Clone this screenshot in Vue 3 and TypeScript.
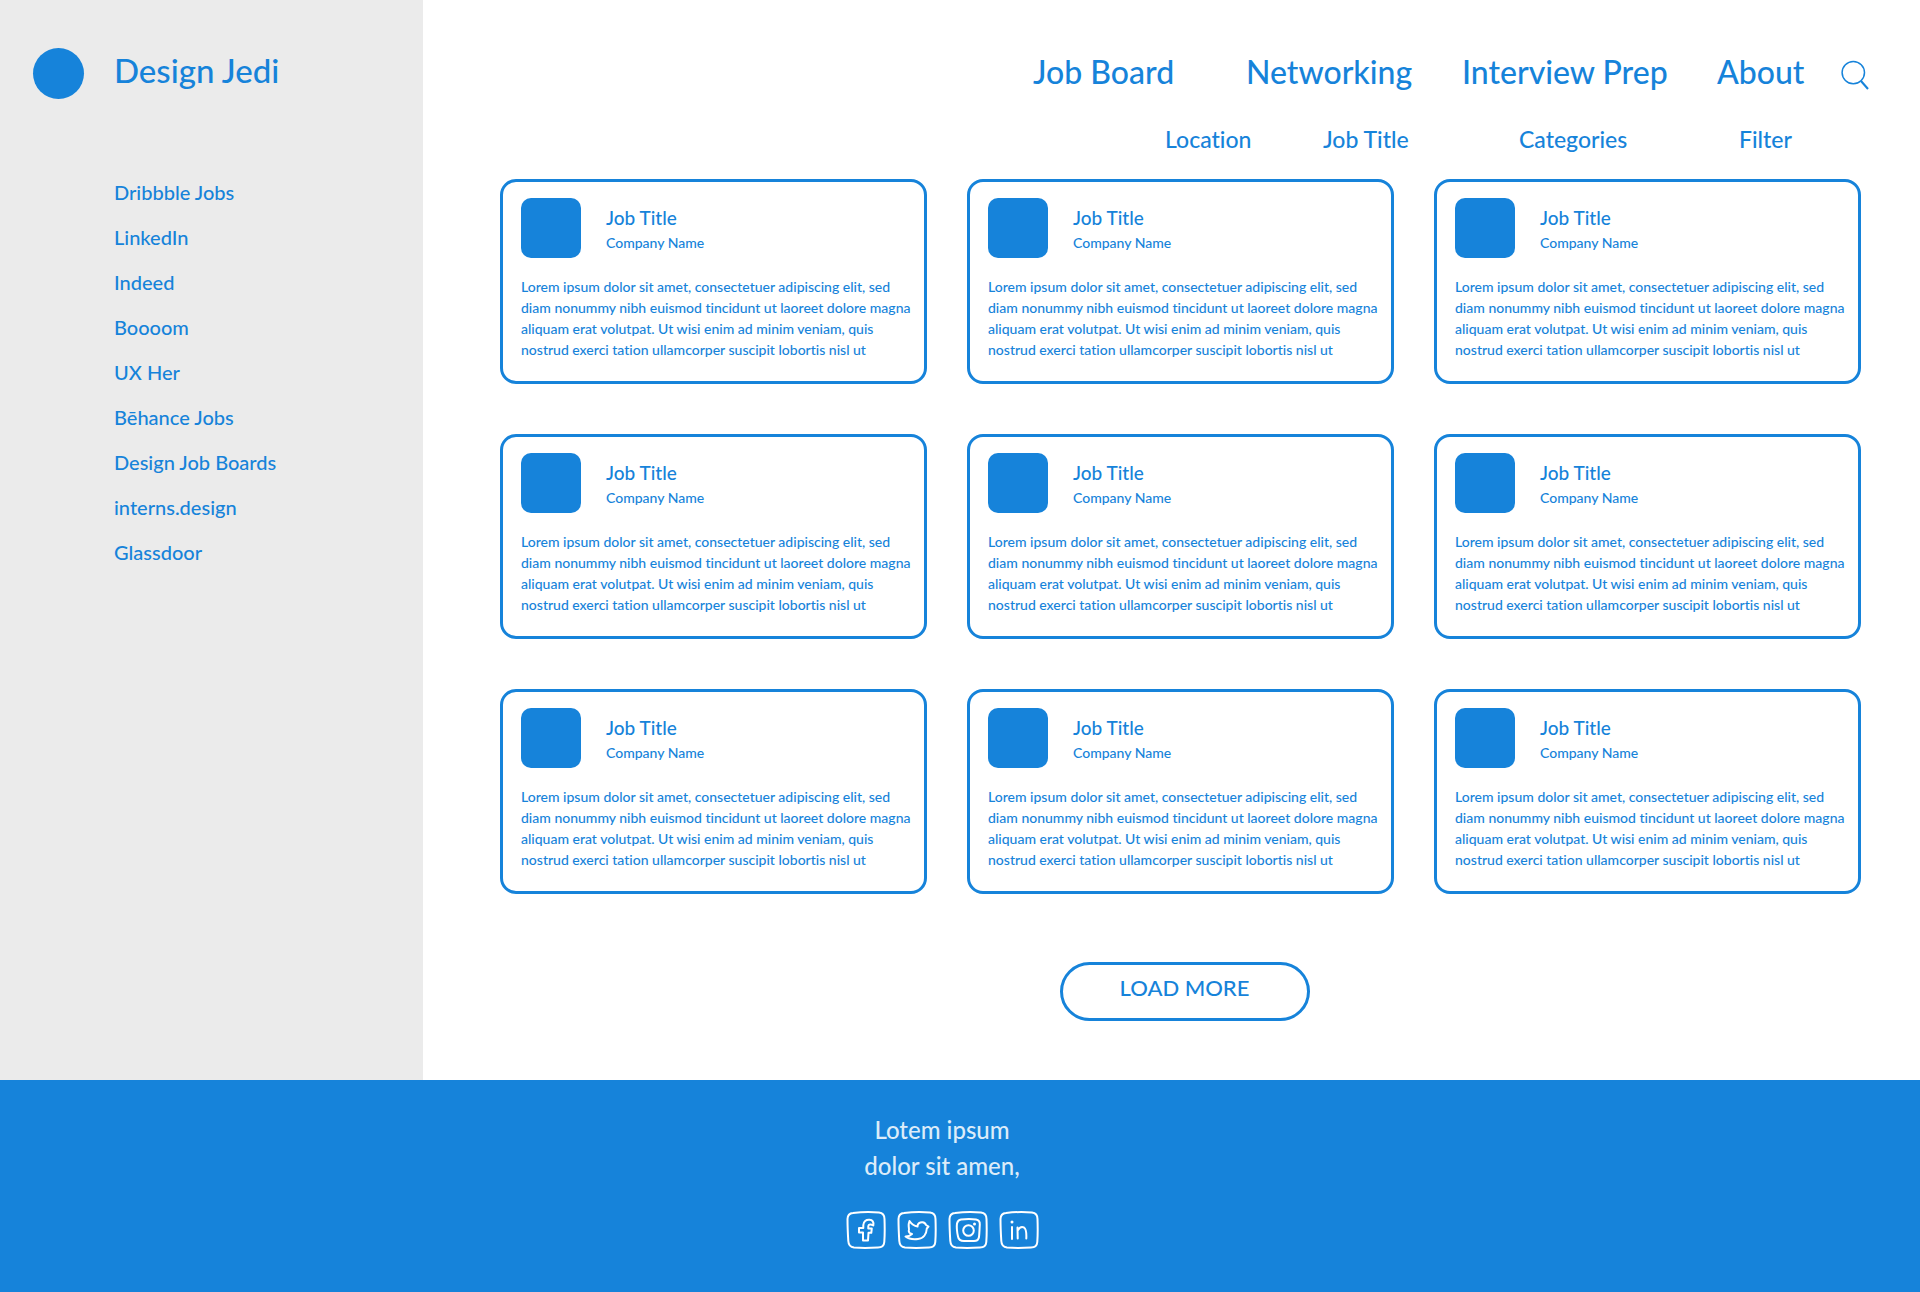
<script setup lang="ts">
interface Job {
  id: number
  title: string
  company: string
  summary: string
}

const boards: string[] = [
  'Dribbble Jobs',
  'LinkedIn',
  'Indeed',
  'Boooom',
  'UX Her',
  'Bēhance Jobs',
  'Design Job Boards',
  'interns.design',
  'Glassdoor',
]

const sections: string[] = ['Job Board', 'Networking', 'Interview Prep', 'About']
const filters: string[] = ['Location', 'Job Title', 'Categories', 'Filter']

const summary = [
  'Lorem ipsum dolor sit amet, consectetuer adipiscing elit, sed',
  'diam nonummy nibh euismod tincidunt ut laoreet dolore magna',
  'aliquam erat volutpat. Ut wisi enim ad minim veniam, quis',
  'nostrud exerci tation ullamcorper suscipit lobortis nisl ut',
].join('\n')

const jobs: Job[] = Array.from({ length: 9 }, (_, id) => ({
  id,
  title: 'Job Title',
  company: 'Company Name',
  summary,
}))
</script>

<template>
  <div class="page">
    <div class="body">
      <aside class="sidebar">
        <a class="brand" href="#">
          <span class="brand-mark"></span>
          <span class="brand-name">Design Jedi</span>
        </a>
        <nav class="boards" aria-label="Job sources">
          <a v-for="board in boards" :key="board" href="#">{{ board }}</a>
        </nav>
      </aside>

      <main class="main">
        <header class="topbar">
          <nav class="sections" aria-label="Main">
            <a v-for="section in sections" :key="section" href="#">{{ section }}</a>
          </nav>
          <button class="search" type="button" aria-label="Search">
            <svg viewBox="0 0 28 30" width="28" height="30" fill="none" stroke="currentColor" stroke-width="1.5">
              <circle cx="12.3" cy="12.6" r="11.2" />
              <path d="M20 21 L27 29" stroke-width="2" />
            </svg>
          </button>
        </header>

        <div class="filters">
          <button v-for="filter in filters" :key="filter" type="button">{{ filter }}</button>
        </div>

        <section class="jobs">
          <article v-for="job in jobs" :key="job.id" class="card">
            <div class="card-head">
              <div class="logo"></div>
              <div>
                <h2>{{ job.title }}</h2>
                <p class="company">{{ job.company }}</p>
              </div>
            </div>
            <p class="summary">{{ job.summary }}</p>
          </article>
        </section>

        <div class="more">
          <button class="load-more" type="button">LOAD MORE</button>
        </div>
      </main>
    </div>

    <footer class="footer">
      <p>Lotem ipsum<br />dolor sit amen,</p>
      <div class="social">
        <a href="#" aria-label="Facebook">
          <svg viewBox="0 0 40 38" width="40" height="38">
            <path class="frame" d="M7 2 C15 1 27 1 33 1.500 C37 2 38.500 4 38.500 8 C38.800 16 38.800 24 38.300 31 C38 35 36 36.500 32 36.500 C24 37 14 37 8 36.500 C4 36 2.500 34 2.300 30 C1.800 22 1.500 14 1.500 8 C1.600 4 3 2.300 7 2 Z" />
            <path d="M17 29.500 L17 21.500 L13 21.500 L13 17 L17.300 17 L17.300 14 C17.500 10.500 20 8.500 23.500 8.800 C26.500 9 28 11 27.300 14.500 C25 13 22.500 13 22.300 15 L22.300 17.500 L25.800 17.500 L25.300 21.800 L22.500 21.800 L22 29.500 Z" />
          </svg>
        </a>
        <a href="#" aria-label="Twitter">
          <svg viewBox="0 0 40 38" width="40" height="38">
            <path class="frame" d="M7 2 C15 1 27 1 33 1.500 C37 2 38.500 4 38.500 8 C38.800 16 38.800 24 38.300 31 C38 35 36 36.500 32 36.500 C24 37 14 37 8 36.500 C4 36 2.500 34 2.300 30 C1.800 22 1.500 14 1.500 8 C1.600 4 3 2.300 7 2 Z" />
            <path d="M12.500 10 C14.500 13 17 15 20.500 15.500 C20.500 12.500 23 11 25.500 11.200 C27.500 11.400 28.500 12.500 29 14 L31.500 15.500 L29.800 17.500 C29.500 23 26.500 27.500 21 28 C16 28.500 11 27.500 8.500 25.500 C11.500 25.500 13.500 24.500 15 23 C12.500 22.500 11.500 21 11.800 19.500 C12.500 19 11.500 16 11.700 14.500 C11.500 13 12 11.500 12.500 10 Z" />
          </svg>
        </a>
        <a href="#" aria-label="Instagram">
          <svg viewBox="0 0 40 38" width="40" height="38">
            <path class="frame" d="M7 2 C15 1 27 1 33 1.500 C37 2 38.500 4 38.500 8 C38.800 16 38.800 24 38.300 31 C38 35 36 36.500 32 36.500 C24 37 14 37 8 36.500 C4 36 2.500 34 2.300 30 C1.800 22 1.500 14 1.500 8 C1.600 4 3 2.300 7 2 Z" />
            <path d="M13 8.500 C18 8 24 8 28 8.500 C31 9 32 10.500 31.800 13.500 C31.500 18 31.500 22 31 26 C30.500 29 29 30 26 30 L16 30 C12 30 10.500 28.500 10 25.500 C9 21 8.500 16 9 12.500 C9.500 10 10.500 8.800 13 8.500 Z" />
            <circle cx="20.500" cy="19.500" r="5.300" />
            <circle class="dot" cx="26.500" cy="13" r="1.500" />
          </svg>
        </a>
        <a href="#" aria-label="LinkedIn">
          <svg viewBox="0 0 40 38" width="40" height="38">
            <path class="frame" d="M7 2 C15 1 27 1 33 1.500 C37 2 38.500 4 38.500 8 C38.800 16 38.800 24 38.300 31 C38 35 36 36.500 32 36.500 C24 37 14 37 8 36.500 C4 36 2.500 34 2.300 30 C1.800 22 1.500 14 1.500 8 C1.600 4 3 2.300 7 2 Z" />
            <path d="M13 16 L13 28 M18.500 16.500 L18.700 27.500 M18.700 19.500 C20.500 16.300 23 15.500 25 16.500 C27.500 18 27.500 23 27.300 27.500" />
            <circle class="dot" cx="13" cy="11" r="1.500" />
          </svg>
        </a>
      </div>
    </footer>
  </div>
</template>

<style>
body {
  margin: 0;
  background: #fff;
}
</style>

<style scoped>
.page {
  min-height: 100vh;
  display: flex;
  flex-direction: column;
  color: #1683da;
  font-family: 'Tekton Pro', Lato, 'Open Sans', sans-serif;
  font-weight: 500;
  font-variant-ligatures: none;
}

a {
  color: inherit;
  text-decoration: none;
}

button {
  padding: 0;
  border: 0;
  background: none;
  color: inherit;
  font: inherit;
  cursor: pointer;
}

h2,
p {
  margin: 0;
  font-weight: inherit;
}

.body {
  display: flex;
}

.sidebar {
  flex: 0 0 423px;
  box-sizing: border-box;
  padding: 48px 33px;
  background: #ebebeb;
}

.brand {
  display: flex;
  align-items: flex-start;
  gap: 30px;
}

.brand-mark {
  width: 51px;
  height: 51px;
  border-radius: 50%;
  background: #1683da;
}

.brand-name {
  font-size: 33px;
  line-height: 44px;
}

.boards {
  display: flex;
  flex-direction: column;
  margin: 71px 0 0 81px;
  font-size: 20px;
  line-height: 45px;
}

.main {
  flex: 1;
  min-width: 0;
  display: flex;
  flex-direction: column;
  padding: 48px 59px 59px 77px;
}

.topbar {
  display: flex;
  justify-content: flex-end;
  margin-right: -8px;
}

.sections {
  display: grid;
  grid-template-columns: 213px 216px 255px 124px;
  font-size: 32px;
  line-height: 48px;
}

.search {
  display: flex;
  align-items: center;
  padding-top: 6px;
}

.filters {
  display: grid;
  grid-template-columns: 158px 196px 220px 54px;
  justify-content: end;
  margin: 27px 68px 0 0;
  font-size: 23px;
  line-height: 32px;
}

.filters button {
  text-align: left;
}

.jobs {
  display: grid;
  grid-template-columns: repeat(3, minmax(0, 1fr));
  gap: 50px 40px;
  margin-top: 24px;
}

.card {
  box-sizing: border-box;
  min-height: 205px;
  padding: 16px 18px;
  border: 3px solid #1683da;
  border-radius: 16px;
}

.card-head {
  display: flex;
  gap: 25px;
}

.logo {
  width: 60px;
  height: 60px;
  border-radius: 10px;
  background: #1683da;
}

h2 {
  padding-top: 6px;
  font-size: 19px;
  line-height: 28px;
}

.company {
  font-size: 14px;
  line-height: 22px;
}

.summary {
  margin-top: 18px;
  font-size: 14px;
  line-height: 21px;
  white-space: pre;
}

.more {
  display: flex;
  justify-content: center;
  margin-top: 68px;
  padding-left: 8px;
}

.load-more {
  box-sizing: border-box;
  width: 250px;
  height: 59px;
  padding-bottom: 8px;
  border: 3px solid #1683da;
  border-radius: 30px;
  font-size: 22px;
}

.footer {
  flex: 1;
  display: flex;
  flex-direction: column;
  align-items: center;
  gap: 27px;
  padding: 32px 36px 43px 0;
  background: #1683da;
  color: #dcecf9;
  font-size: 24px;
  line-height: 36px;
  text-align: center;
}

.social {
  display: flex;
  gap: 11px;
}

.social a {
  display: flex;
}

.social svg {
  fill: none;
  stroke: #fff;
  stroke-width: 2;
  stroke-linecap: round;
  stroke-linejoin: round;
}

.social .dot {
  fill: #fff;
  stroke: none;
}
</style>
